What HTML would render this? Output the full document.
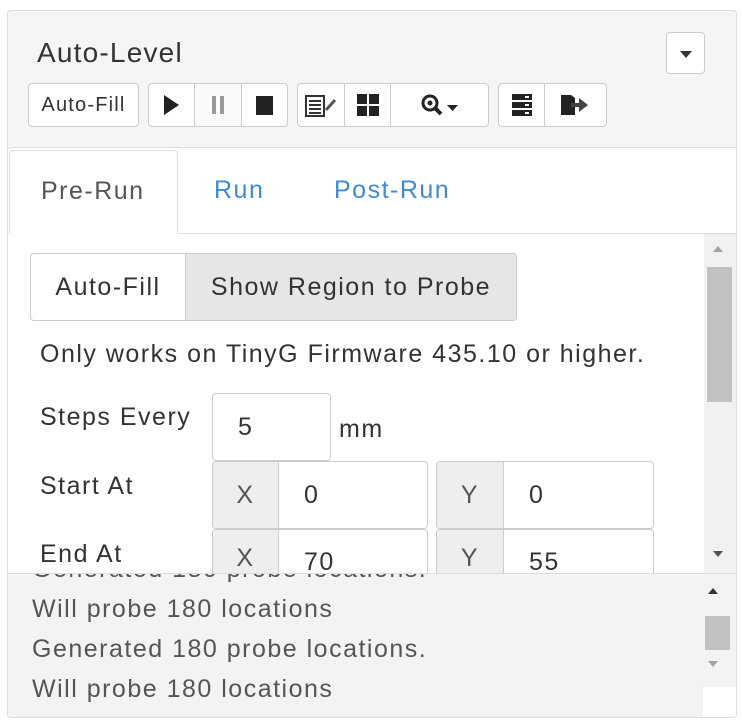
<!DOCTYPE html>
<html><head><style>
*{box-sizing:border-box;margin:0;padding:0}
body{width:742px;height:727px;background:#fff;font-family:"Liberation Sans",sans-serif;position:relative;overflow:hidden;color:#333}
.a{position:absolute}
.panel{left:7px;top:10px;width:730px;height:708px;border:1px solid #ddd;border-radius:4px;background:#f5f5f5;overflow:hidden}
.grp{position:absolute;border:1px solid #ccc;border-radius:4px;background:#fff;height:43px;display:flex;overflow:hidden}
.grp>div{border-right:1px solid #ccc;display:flex;align-items:center;justify-content:center;height:100%;flex-shrink:0}
.grp>div:last-child{border-right:none}
.inp{position:absolute;border:1px solid #ccc;border-radius:4px;background:#fff;font-size:25px;letter-spacing:1.5px;display:flex;align-items:center}
.addon{background:#eee;border-right:1px solid #ccc;height:100%;display:flex;align-items:center;justify-content:center;color:#555;flex-shrink:0}
.t{font-size:25px;letter-spacing:1.5px}
</style></head><body>
<div class="a panel">
 <div class="a" style="left:29px;top:26px;font-size:28px;letter-spacing:1.2px;color:#333">Auto-Level</div>
 <div class="a" style="left:658px;top:21px;width:39px;height:42px;border:1px solid #ccc;border-radius:4px;background:#fff"><div class="a" style="left:13px;top:18px;border-left:6px solid transparent;border-right:6px solid transparent;border-top:7px solid #333"></div></div>
 <div class="grp" style="left:20px;top:72px;width:111px;height:44px"><div style="width:100%;font-size:20px;letter-spacing:1.2px">Auto-Fill</div></div>
 <div class="grp" style="left:140px;top:72px;width:140px;height:44px">
  <div style="width:46px"><div style="width:0;height:0;border-top:10px solid transparent;border-bottom:10px solid transparent;border-left:15px solid #222"></div></div>
  <div style="width:47px;background:#fafafa"><div style="width:12px;height:18px;border-left:4px solid #999;border-right:4px solid #999"></div></div>
  <div style="width:45px"><div style="width:17px;height:19px;background:#222"></div></div>
 </div>
 <div class="grp" style="left:289px;top:72px;width:192px;height:44px">
  <div style="width:47px"><svg width="34" height="26"><rect x="2" y="4" width="18" height="20" fill="none" stroke="#333" stroke-width="2"/><path d="M5 9h12M5 13h12M5 17h12M5 21h12" stroke="#333" stroke-width="2"/><path d="M22 18l9-10" stroke="#555" stroke-width="3"/></svg></div>
  <div style="width:46px"><svg width="22" height="22"><rect x="0" y="0" width="10" height="10" fill="#222"/><rect x="12" y="0" width="10" height="10" fill="#222"/><rect x="0" y="12" width="10" height="10" fill="#222"/><rect x="12" y="12" width="10" height="10" fill="#222"/></svg></div>
  <div style="flex:1"><svg width="40" height="24"><circle cx="10" cy="10" r="7" fill="none" stroke="#222" stroke-width="3"/><circle cx="10" cy="10" r="2.5" fill="#222"/><path d="M15 15l6 6" stroke="#222" stroke-width="4"/><path d="M27 12h11l-5.5 6z" fill="#222"/></svg></div>
 </div>
 <div class="grp" style="left:490px;top:72px;width:109px;height:44px">
  <div style="width:46px"><svg width="20" height="22"><rect x="0" y="0" width="20" height="6" fill="#222"/><rect x="0" y="8" width="20" height="6" fill="#222"/><rect x="0" y="16" width="20" height="6" fill="#222"/><rect x="13" y="2" width="4" height="2" fill="#fff"/><rect x="13" y="10" width="4" height="2" fill="#fff"/><rect x="13" y="18" width="4" height="2" fill="#fff"/></svg></div>
  <div style="flex:1"><svg width="30" height="24"><path d="M0 2h10l4 3v17H0z" fill="#222"/><path d="M10 10h8V5l9 7-9 7v-5h-8z" fill="#444"/></svg></div>
 </div>
 <div class="a" style="left:0;top:136px;width:730px;border-top:1px solid #ddd"></div>
 <div class="a" style="left:0;top:137px;width:730px;height:570px;background:#fff"></div>
 <div class="a t" style="left:1px;top:139px;width:169px;height:84px;border:1px solid #ddd;border-bottom:none;border-radius:4px 4px 0 0;background:#fff;color:#555;padding:26px 0 0 31px">Pre-Run</div>
 <div class="a" style="left:170px;top:222px;width:560px;border-top:1px solid #ddd"></div>
 <div class="a t" style="left:206px;top:165px;color:#428bca">Run</div>
 <div class="a t" style="left:326px;top:165px;color:#428bca">Post-Run</div>
 <div class="a t" style="left:22px;top:242px;width:487px;height:68px;border:1px solid #ccc;border-radius:4px;display:flex;overflow:hidden">
  <div style="width:155px;border-right:1px solid #ccc;display:flex;align-items:center;justify-content:center">Auto-Fill</div>
  <div style="flex:1;background:#e6e6e6;display:flex;align-items:center;justify-content:center">Show Region to Probe</div>
 </div>
 <div class="a t" style="left:32px;top:329px">Only works on TinyG Firmware 435.10 or higher.</div>
 <div class="a t" style="left:32px;top:392px">Steps Every</div>
 <div class="inp" style="left:204px;top:382px;width:119px;height:68px;padding-left:25px">5</div>
 <div class="a t" style="left:331px;top:404px">mm</div>
 <div class="a t" style="left:32px;top:461px">Start At</div>
 <div class="inp" style="left:204px;top:450px;width:216px;height:68px;overflow:hidden"><div class="addon" style="width:66px">X</div><div style="padding-left:25px">0</div></div>
 <div class="inp" style="left:428px;top:450px;width:218px;height:68px;overflow:hidden"><div class="addon" style="width:67px">Y</div><div style="padding-left:25px">0</div></div>
 <div class="a t" style="left:32px;top:529px">End At</div>
 <div class="inp" style="left:204px;top:518px;width:216px;height:68px;overflow:hidden;align-items:flex-start"><div class="addon" style="width:66px;padding-top:14px;align-items:flex-start">X</div><div style="padding:18px 0 0 25px">70</div></div>
 <div class="inp" style="left:428px;top:518px;width:218px;height:68px;overflow:hidden;align-items:flex-start"><div class="addon" style="width:67px;padding-top:14px;align-items:flex-start">Y</div><div style="padding:18px 0 0 25px">55</div></div>
 <div class="a" style="left:696px;top:223px;width:34px;height:340px;background:#f1f1f1"></div>
 <div class="a" style="left:705px;top:235px;border-left:5px solid transparent;border-right:5px solid transparent;border-bottom:6px solid #a3a3a3"></div>
 <div class="a" style="left:699px;top:256px;width:25px;height:135px;background:#c1c1c1"></div>
 <div class="a" style="left:705px;top:540px;border-left:5px solid transparent;border-right:5px solid transparent;border-top:6px solid #505050"></div>
 <div class="a" style="left:0;top:562px;width:730px;height:146px;background:#f3f3f3;border-top:1px solid #ddd;overflow:hidden;color:#555">
  <div class="a t" style="left:24px;top:-19px">Generated 180 probe locations.</div>
  <div class="a t" style="left:24px;top:21px">Will probe 180 locations</div>
  <div class="a t" style="left:24px;top:61px">Generated 180 probe locations.</div>
  <div class="a t" style="left:24px;top:101px">Will probe 180 locations</div>
  <div class="a" style="left:689px;top:0;width:41px;height:146px;background:#f3f3f3"></div>
  <div class="a" style="left:700px;top:14px;border-left:5px solid transparent;border-right:5px solid transparent;border-bottom:6px solid #333"></div>
  <div class="a" style="left:697px;top:42px;width:25px;height:34px;background:#c1c1c1"></div>
  <div class="a" style="left:700px;top:87px;border-left:5px solid transparent;border-right:5px solid transparent;border-top:6px solid #a3a3a3"></div>
  <div class="a" style="left:695px;top:113px;width:35px;height:33px;background:#fff"></div>
 </div>
</div>
</body></html>
